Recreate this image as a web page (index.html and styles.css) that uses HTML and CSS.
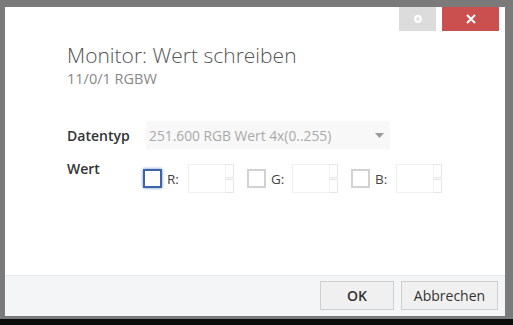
FILE: index.html
```html
<!DOCTYPE html>
<html lang="de">
<head>
  <meta charset="UTF-8" />
  <title>Monitor: Wert schreiben</title>
  <link rel="stylesheet" href="styles.css">
</head>
<body>
  <div class="frame">
    <div class="dialog">
      <div class="titlebar">
        <button class="win-btn win-btn-restore" title="Wiederherstellen">
          <svg width="10" height="10" viewBox="0 0 10 10"><circle cx="5" cy="5" r="2.8" fill="none" stroke="#fff" stroke-width="2.2"/></svg>
        </button>
        <button class="win-btn win-btn-close" title="Schließen">
          <svg width="12" height="12" viewBox="0 0 12 12"><path d="M2 2 L10 10 M10 2 L2 10" stroke="#fff" stroke-width="2"/></svg>
        </button>
      </div>

      <div class="heading">
        <h1>Monitor: Wert schreiben</h1>
        <p>11/0/1 RGBW</p>
      </div>

      <div class="form">
        <div class="row">
          <label class="field-label">Datentyp</label>
          <div class="select">
            <span>251.600 RGB Wert 4x(0..255)</span>
            <svg width="9" height="5" viewBox="0 0 9 5"><path d="M0 0 H9 L4.5 5 Z" fill="#9a9a9a"/></svg>
          </div>
        </div>

        <div class="row row-value">
          <label class="field-label">Wert</label>
          <div class="channels">
            <div class="channel">
              <span class="check check-focus"></span>
              <span class="channel-name">R:</span>
              <span class="num"></span>
              <span class="spin"><i></i><i></i></span>
            </div>
            <div class="channel">
              <span class="check"></span>
              <span class="channel-name">G:</span>
              <span class="num"></span>
              <span class="spin"><i></i><i></i></span>
            </div>
            <div class="channel">
              <span class="check"></span>
              <span class="channel-name">B:</span>
              <span class="num"></span>
              <span class="spin"><i></i><i></i></span>
            </div>
          </div>
        </div>
      </div>

      <div class="footer">
        <button class="btn btn-ok">OK</button>
        <button class="btn btn-cancel">Abbrechen</button>
      </div>
    </div>
  </div>
</body>
</html>
```

FILE: styles.css
```css
html {
  background: #0c0c0c;
}

body {
  margin: 0;
  font-family: 'Open Sans', 'Noto Sans', sans-serif;
  color: #333;
}

.frame {
  width: 513px;
  height: 319px;
  box-sizing: border-box;
  padding: 7px 8px 3px 5px;
  background: #7a7a7a;
}

.dialog {
  width: 500px;
  height: 309px;
  background: #fff;
  display: flex;
  flex-direction: column;
}

.titlebar {
  display: flex;
  justify-content: flex-end;
  gap: 6px;
  padding-right: 6px;
}

.win-btn {
  height: 24px;
  border: none;
  padding: 0;
  display: flex;
  align-items: center;
  justify-content: center;
}

.win-btn-restore {
  width: 37px;
  background: #dcdcdc;
}

.win-btn-close {
  width: 57px;
  background: #c9504f;
}

.heading {
  padding: 9px 0 0 62px;
}

.heading h1 {
  margin: 0;
  font-size: 21px;
  font-weight: 300;
  line-height: 30px;
  color: #555;
}

.heading p {
  margin: 0;
  font-size: 14.5px;
  line-height: 18px;
  color: #888;
}

.form {
  padding: 33px 0 0 62px;
}

.row {
  display: flex;
  align-items: center;
}

.field-label {
  width: 79px;
  font-size: 14px;
  font-weight: 600;
  color: #333;
}

.select {
  width: 244px;
  height: 28px;
  box-sizing: border-box;
  padding: 0 6px 0 3px;
  background: #f8f8f8;
  display: flex;
  align-items: center;
  justify-content: space-between;
  font-size: 13.8px;
  color: #aaa;
}

.row-value {
  align-items: flex-start;
  margin-top: 11px;
}

.row-value .field-label {
  width: 76px;
  line-height: 18px;
}

.channels {
  display: flex;
  gap: 13px;
  margin-top: 4px;
}

.channel {
  display: flex;
  align-items: center;
}

.check {
  width: 15px;
  height: 15px;
  border: 2px solid #d2d2d2;
  background: #fff;
}

.check-focus {
  border-color: #3e63a8;
  box-shadow: 0 0 3px #6b88c4;
}

.channel-name {
  font-size: 13.5px;
  color: #444;
  margin-left: 5px;
  width: 21px;
}

.num {
  width: 38px;
  height: 29px;
  border: 1px solid #f0f0f0;
  box-sizing: border-box;
}

.spin {
  width: 8px;
  height: 29px;
  display: flex;
  flex-direction: column;
  gap: 1px;
}

.spin i {
  flex: 1;
  border: 1px solid #e6e6e6;
  border-left: none;
}

.footer {
  margin-top: auto;
  height: 41px;
  box-sizing: border-box;
  border-top: 1px solid #e8e8e8;
  background: #f4f5f7;
  display: flex;
  justify-content: flex-end;
  align-items: center;
  gap: 7px;
  padding: 0 7px 2px 0;
}

.btn {
  height: 29px;
  background: #f0f0f0;
  border: 1px solid #cfcfcf;
  font-family: inherit;
  font-size: 14px;
  color: #333;
}

.btn-ok {
  width: 74px;
  font-weight: 600;
}

.btn-cancel {
  width: 97px;
}
```
